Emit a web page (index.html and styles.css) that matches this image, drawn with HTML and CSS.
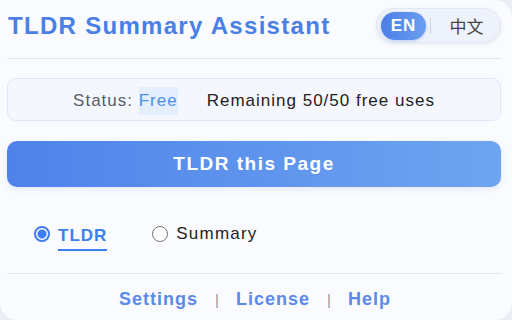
FILE: index.html
```html
<!DOCTYPE html>
<html lang="en">
  <head>
    <meta charset="UTF-8" />
    <meta name="viewport" content="width=device-width, initial-scale=1.0" />
    <title>TLDR Summary Assistant</title>
    <link rel="stylesheet" href="styles.css">
  </head>
  <body>
    <div class="popup">
      <!-- Header -->
      <div class="header">
        <h1>TLDR Summary Assistant</h1>
        <div class="lang-toggle">
          <button class="lang active">EN</button>
          <span class="lang-sep"></span>
          <button class="lang">中文</button>
        </div>
      </div>

      <!-- Status -->
      <div class="status">
        <span class="status-label">Status: <span class="plan">Free</span></span>
        <span class="remaining">Remaining 50/50 free uses</span>
      </div>

      <button class="tldr-btn">TLDR this Page</button>

      <!-- Mode -->
      <div class="modes">
        <label class="mode selected">
          <span class="radio"></span>
          <span class="mode-text">TLDR</span>
        </label>
        <label class="mode">
          <span class="radio"></span>
          <span class="mode-text">Summary</span>
        </label>
      </div>

      <!-- Footer -->
      <div class="footer">
        <a href="#">Settings</a>
        <span class="sep">|</span>
        <a href="#">License</a>
        <span class="sep">|</span>
        <a href="#">Help</a>
      </div>
    </div>
  </body>
</html>
```

FILE: styles.css
```css
/* Global Styles */
* {
  margin: 0;
  padding: 0;
  box-sizing: border-box;
}
body {
  font-family: "Liberation Sans", Arial, "Noto Sans CJK SC", sans-serif;
  background: #eceef5;
  width: 512px;
  height: 320px;
  overflow: hidden;
}

.popup {
  width: 512px;
  height: 320px;
  background: #fafbfe;
  border-radius: 0 18px 18px 18px;
  padding: 8px 11px 0 7px;
}

/* Header */
.header {
  display: flex;
  justify-content: space-between;
  align-items: center;
  padding-bottom: 15px;
  border-bottom: 1px solid #e2e4e9;
}

h1 {
  font-size: 24px;
  letter-spacing: 1.3px;
  font-weight: bold;
  color: #4a7fe6;
  padding-left: 1px;
}

.lang-toggle {
  display: flex;
  align-items: center;
  width: 125px;
  height: 35px;
  padding: 0 4px;
  background: #eef2fa;
  border: 1px solid #e2e7f3;
  border-radius: 18px;
  box-shadow: 0 1px 4px rgba(80, 100, 160, 0.12);
}

.lang {
  border: none;
  background: none;
  font-family: inherit;
  font-size: 17px;
  color: #444;
  height: 28px;
  border-radius: 14px;
  cursor: pointer;
}

.lang.active {
  background: linear-gradient(90deg, #4c7fe8, #6a9ef0);
  color: white;
  font-weight: bold;
  letter-spacing: 1px;
  width: 45px;
  box-shadow: 0 1px 3px rgba(60, 110, 220, 0.3);
}

.lang-sep {
  width: 1px;
  height: 16px;
  background: #d0d4dc;
  margin: 0 4px;
}

.lang:last-child {
  font-family: "Noto Sans CJK SC", sans-serif;
  flex: 1;
  padding-left: 2px;
}

/* Status Box */
.status {
  display: flex;
  justify-content: center;
  align-items: center;
  gap: 29px;
  height: 43px;
  margin-top: 19px;
  padding-top: 2px;
  background: #f5f7fe;
  border: 1px solid #e1e7f8;
  border-radius: 9px;
  font-size: 17px;
  letter-spacing: 1px;
}

.status-label {
  color: #5a5d63;
}

.plan {
  color: #4a8fe8;
  background: #e4eefc;
  padding: 4px 0 5px;
}

.remaining {
  color: #222;
}

/* Main Button */
.tldr-btn {
  display: block;
  width: 100%;
  height: 46px;
  margin-top: 20px;
  border: none;
  border-radius: 10px;
  background: linear-gradient(90deg, #4f82ea, #6ea5f0);
  color: white;
  font-family: inherit;
  font-size: 19px;
  letter-spacing: 1.5px;
  font-weight: bold;
  box-shadow: 0 2px 6px rgba(80, 120, 220, 0.15);
  cursor: pointer;
}

/* Modes */
.modes {
  display: flex;
  align-items: center;
  gap: 45px;
  height: 87px;
  padding: 8px 0 0 27px;
  border-bottom: 1px solid #e2e4e9;
}

.mode {
  display: flex;
  align-items: center;
  gap: 8px;
  font-size: 17px;
  letter-spacing: 1.2px;
  color: #222;
  cursor: pointer;
}

.radio {
  width: 16px;
  height: 16px;
  border: 1px solid #777;
  border-radius: 50%;
  background: white;
}

.mode.selected .radio {
  border: 2px solid #3d7ef0;
  background: radial-gradient(circle, #3d7ef0 4px, white 5px);
}

.mode.selected .mode-text {
  color: #3d7ef0;
  font-weight: bold;
  letter-spacing: 1px;
  border-bottom: 2px solid #3d7ef0;
  padding: 4px 0 3px;
  margin-top: 5px;
}

/* Footer */
.footer {
  display: flex;
  justify-content: center;
  align-items: center;
  gap: 17px;
  height: 51px;
  padding-left: 2px;
}

.footer a {
  color: #5b8ae8;
  font-size: 18px;
  letter-spacing: 1px;
  font-weight: bold;
  text-decoration: none;
}

.footer .sep {
  color: #999;
  font-size: 15px;
}
```
